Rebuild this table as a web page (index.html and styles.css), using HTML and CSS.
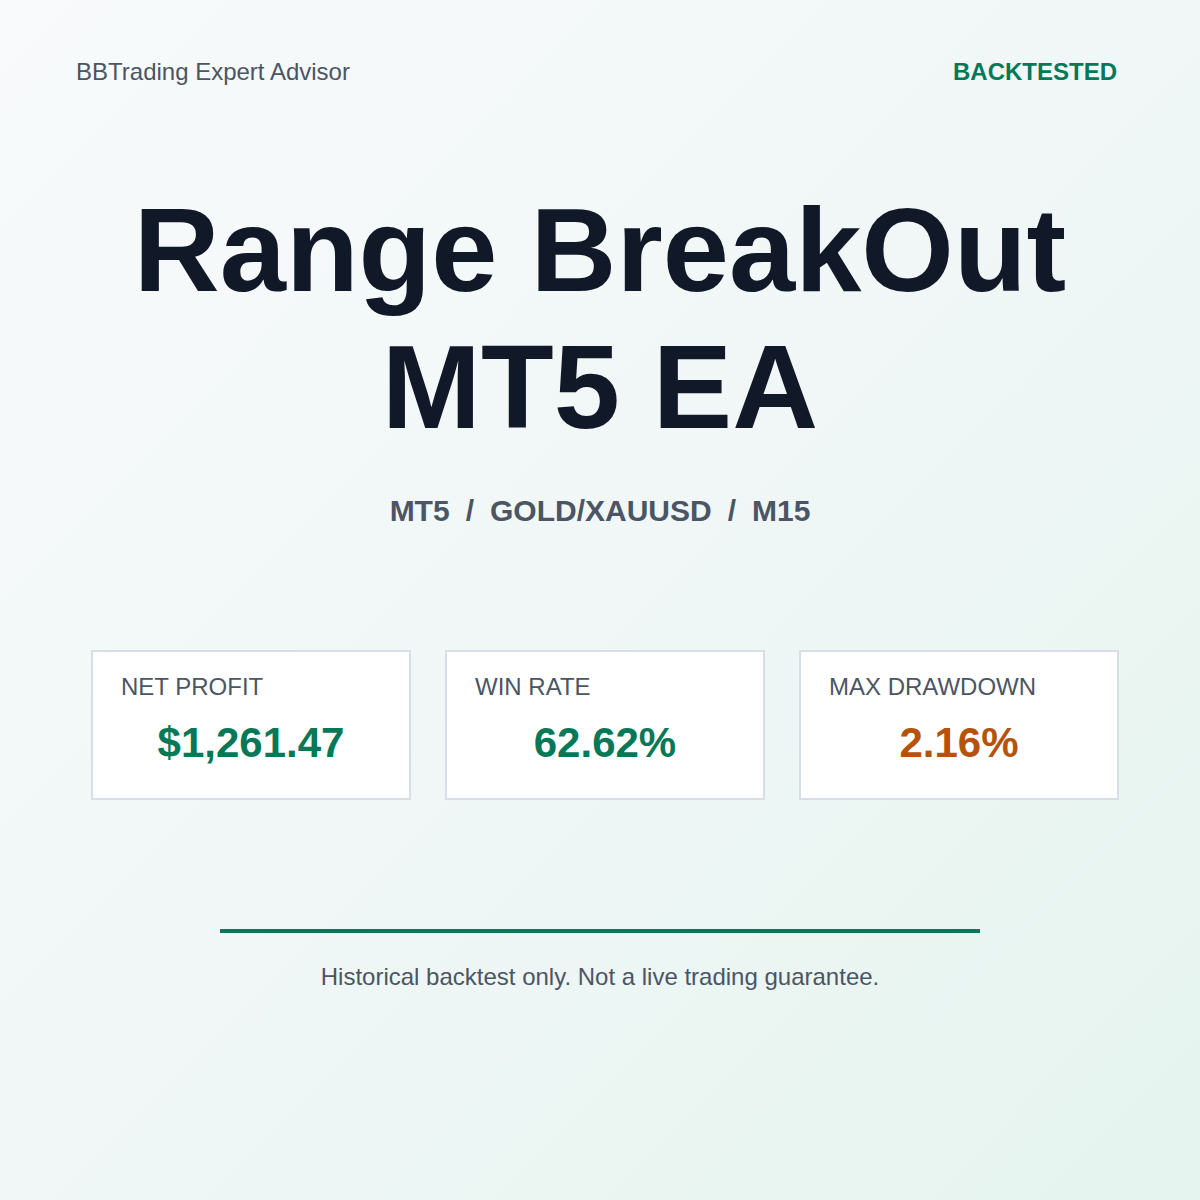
FILE: index.html
```html
<!DOCTYPE html>
<html lang="en">
<head>
<meta charset="utf-8">
<title>Range BreakOut MT5 EA</title>
<link rel="stylesheet" href="styles.css">
</head>
<body>
<div class="page">
  <header class="top">
    <span class="brand">BBTrading Expert Advisor</span>
    <span class="badge">BACKTESTED</span>
  </header>
  <h1 class="title">Range BreakOut<br>MT5 EA</h1>
  <div class="sub">
    <span>MT5</span><span class="sep">/</span><span>GOLD/XAUUSD</span><span class="sep">/</span><span>M15</span>
  </div>
  <section class="cards">
    <div class="card">
      <div class="label">NET PROFIT</div>
      <div class="value green">$1,261.47</div>
    </div>
    <div class="card">
      <div class="label">WIN RATE</div>
      <div class="value green">62.62%</div>
    </div>
    <div class="card">
      <div class="label">MAX DRAWDOWN</div>
      <div class="value orange">2.16%</div>
    </div>
  </section>
  <div class="rule"></div>
  <p class="note">Historical backtest only. Not a live trading guarantee.</p>
</div>
</body>
</html>
```

FILE: styles.css
```css
* { box-sizing: border-box; }
html, body { margin: 0; padding: 0; }
body {
  width: 1200px;
  height: 1200px;
  overflow: hidden;
  font-family: "Liberation Sans", Arial, sans-serif;
  background: linear-gradient(135deg, #f8fafc 0%, #f0f7f6 50%, #e5f4ef 100%);
  color: #4b5563;
}
.page {
  height: 1200px;
  display: flex;
  flex-direction: column;
}
.top {
  display: flex;
  justify-content: space-between;
  padding: 58px 83px 0 76px;
  font-size: 24px;
  line-height: 28px;
}
.brand { color: #4b5563; }
.badge { color: #047857; font-weight: bold; }
.title {
  margin: 95px 0 0;
  text-align: center;
  font-size: 119px;
  line-height: 137px;
  font-weight: bold;
  color: #111827;
}
.sub {
  margin-top: 38px;
  display: flex;
  justify-content: center;
  font-size: 30px;
  line-height: 36px;
  font-weight: bold;
  color: #4b5563;
}
.sep { padding: 0 16px; }
.cards {
  margin-top: 121px;
  padding: 0 81px 0 91px;
  display: grid;
  grid-template-columns: repeat(3, 320px);
  column-gap: 34px;
}
.card {
  height: 150px;
  background: #ffffff;
  border: 2px solid #d8dee8;
  padding: 21px 28px 0;
}
.label {
  font-size: 24px;
  line-height: 28px;
  color: #4b5563;
}
.value {
  margin-top: 18px;
  text-align: center;
  font-size: 42px;
  line-height: 48px;
  font-weight: bold;
}
.green { color: #047857; }
.orange { color: #b45309; }
.rule {
  margin: 129px auto 0;
  width: 760px;
  height: 4px;
  background: #047857;
}
.note {
  margin: 30px 0 0;
  text-align: center;
  font-size: 24px;
  line-height: 28px;
  color: #4b5563;
}
```
